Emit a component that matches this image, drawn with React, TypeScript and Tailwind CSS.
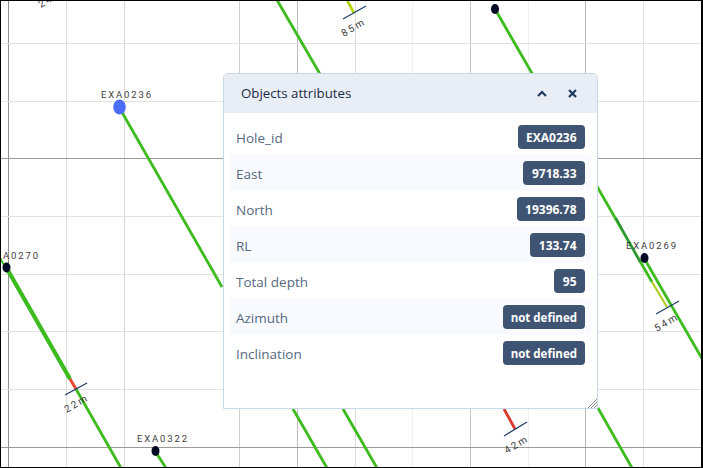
const vLines: [number, string][] = [
  [8.5, "#8f8f8f"],
  [66.5, "#dcdcdc"],
  [124.5, "#d6d6d6"],
  [239.5, "#cfcfcf"],
  [297.5, "#bdbdbd"],
  [355.5, "#dcdcdc"],
  [412.5, "#f0f0f0"],
  [470.5, "#c4c4c4"],
  [528.5, "#f0f0f0"],
  [585.5, "#b8b8b8"],
  [643.5, "#e2e2e2"],
];
const hLines: [number, string][] = [
  [43.5, "#e2e2e2"],
  [101.5, "#e2e2e2"],
  [158.5, "#9a9a9a"],
  [216.5, "#e2e2e2"],
  [274.5, "#e2e2e2"],
  [331.5, "#e2e2e2"],
  [389.5, "#e2e2e2"],
  [447.5, "#9a9a9a"],
];
const segs: [number, number, number, number, string, number][] = [
  [119, 107, 222, 287, "#3dbb1f", 2.8],
  [293, 409, 327, 468, "#3dbb1f", 2.8],
  [343, 409, 377, 468, "#3dbb1f", 2.8],
  [277, 0, 320, 74, "#3dbb1f", 2.8],
  [347, 0, 354, 13, "#b5d60f", 2.8],
  [495, 9, 652, 282, "#3dbb1f", 2.8],
  [652, 282, 667, 307, "#b0cf22", 2.2],
  [616, 218, 640, 262, "#2f8f3a", 2],
  [644, 258, 704, 362, "#3dbb1f", 2.8],
  [598, 408, 632, 468, "#3dbb1f", 2.8],
  [0, 258, 70, 379, "#3dbb1f", 2],
  [6, 267, 70, 379, "#3dbb1f", 4.2],
  [70, 379, 76, 389, "#e8492f", 3],
  [76, 389, 121, 468, "#3dbb1f", 2.8],
  [155, 451, 166, 468, "#3dbb1f", 2.8],
  [504, 409, 515, 429, "#d93a2b", 2.8],
];
const ticks: [number, number, number, number][] = [
  [343, 19, 366, 6],
  [65, 395, 87, 383],
  [504, 436, 527, 422],
  [656, 314, 679, 301],
];
const dots: [number, number][] = [
  [495, 9],
  [6.5, 267.5],
  [155.5, 451],
  [644.5, 258],
];
const names: [string, number, number][] = [
  ["EXA0236", 101, 97.5],
  ["EXA0270", -12, 258.5],
  ["EXA0322", 137, 442],
  ["EXA0269", 626, 249],
];
const depths: [string, number, number][] = [
  ["85m", 354, 28],
  ["22m", 77, 404],
  ["42m", 517, 445],
  ["54m", 667, 323],
  ["24m", 51, -1],
];
const rows: [string, string][] = [
  ["Hole_id", "EXA0236"],
  ["East", "9718.33"],
  ["North", "19396.78"],
  ["RL", "133.74"],
  ["Total depth", "95"],
  ["Azimuth", "not defined"],
  ["Inclination", "not defined"],
];

function MapCanvas() {
  return (
    <svg width="703" height="468" className="block font-['Roboto',sans-serif]">
      {vLines.map(([x, c]) => (
        <line key={x} x1={x} x2={x} y1={0} y2={468} stroke={c} strokeWidth={1} />
      ))}
      {hLines.map(([y, c]) => (
        <line key={y} y1={y} y2={y} x1={0} x2={703} stroke={c} strokeWidth={1} />
      ))}
      {segs.map(([a, b, c, d, col, w], i) => (
        <line key={i} x1={a} y1={b} x2={c} y2={d} stroke={col} strokeWidth={w} />
      ))}
      {ticks.map(([a, b, c, d], i) => (
        <line key={i} x1={a} y1={b} x2={c} y2={d} stroke="#1f3f66" strokeWidth={1.3} />
      ))}
      <ellipse cx={119.5} cy={107} rx={6.3} ry={7.5} fill="#4a6cf7" />
      {dots.map(([x, y]) => (
        <ellipse key={x} cx={x} cy={y} rx={4} ry={5} fill="#050a24" />
      ))}
      {names.map(([t, x, y]) => (
        <text key={t} x={x} y={y} fontSize={9.5} letterSpacing={1.85} fill="#3d3d3d">
          {t}
        </text>
      ))}
      {depths.map(([t, x, y]) => (
        <text
          key={t}
          x={x}
          y={y}
          fontSize={10}
          letterSpacing={2.2}
          fill="#3d3d3d"
          textAnchor="middle"
          dominantBaseline="middle"
          transform={`rotate(-30 ${x} ${y})`}
        >
          {t}
        </text>
      ))}
    </svg>
  );
}

function Panel() {
  return (
    <div className="absolute left-[223px] top-[73px] flex h-[336px] w-[375px] flex-col rounded-t-[5px] border border-[#c9d8e8] bg-white font-['Open_Sans',sans-serif]">
      <div className="flex h-[39px] shrink-0 items-center justify-between rounded-t-[4px] bg-[#e9eef6] pl-[17px] pr-[20px]">
        <span className="text-[13.25px] text-[#1a2b45]">Objects attributes</span>
        <div className="flex items-center gap-[21px]">
          <svg width="10" height="7" viewBox="0 0 10 7" fill="none" stroke="#1e3a5f" strokeWidth="2.2">
            <path d="M1 6 L5 2 L9 6" />
          </svg>
          <svg width="9" height="9" viewBox="0 0 9 9" fill="none" stroke="#1e3a5f" strokeWidth="2.2">
            <path d="M1 1 L8 8 M8 1 L1 8" />
          </svg>
        </div>
      </div>
      <div className="flex flex-col px-[6px] pt-[6px]">
        {rows.map(([k, v], i) => (
          <div
            key={k}
            className={`flex h-[36px] items-center justify-between px-[6px] ${i % 2 === 1 ? "bg-[#f8faff]" : "bg-white"}`}
          >
            <span className="pt-[2px] text-[13.5px] leading-[18px] text-[#55687f]">{k}</span>
            <span
              className={`flex h-[24px] items-center rounded-[4px] bg-[#3f5473] pt-px font-bold text-white ${
                v === "not defined" ? "px-[8px] text-[11.5px]" : "px-[8.5px] text-[12px]"
              }`}
            >
              {v}
            </span>
          </div>
        ))}
      </div>
      <svg
        width="9"
        height="9"
        viewBox="0 0 9 9"
        className="absolute bottom-0 right-0"
        fill="none"
        stroke="#6b6b6b"
        strokeWidth="0.8"
      >
        <path d="M0 9 L9 0 M3 9 L9 3 M6 9 L9 6" />
      </svg>
    </div>
  );
}

export default function App() {
  return (
    <div className="relative h-[468px] w-[703px] overflow-hidden bg-white">
      <MapCanvas />
      <Panel />
      <div className="pointer-events-none absolute inset-0 border-b border-l border-r-2 border-t border-black" />
    </div>
  );
}
